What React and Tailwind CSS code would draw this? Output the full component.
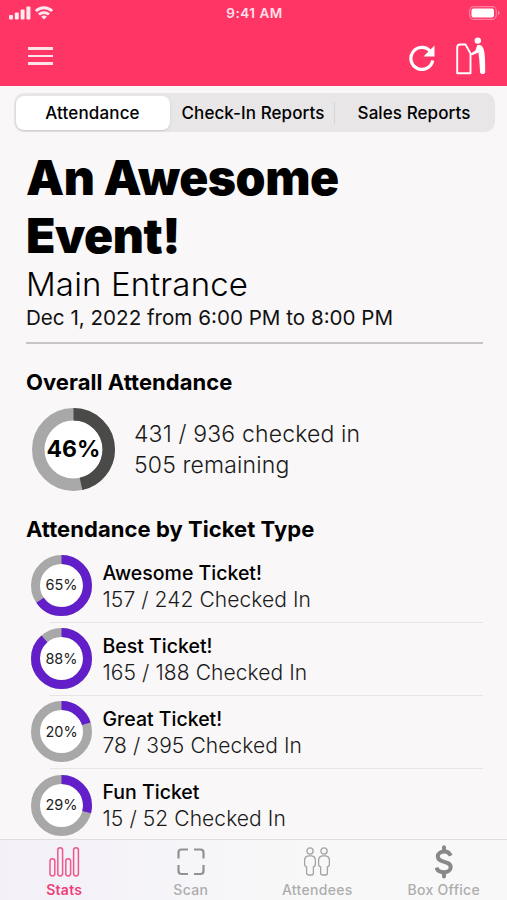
import React from "react";

const tickets = [
  { name: "Awesome Ticket!", percent: 65, checkedIn: 157, total: 242 },
  { name: "Best Ticket!", percent: 88, checkedIn: 165, total: 188 },
  { name: "Great Ticket!", percent: 20, checkedIn: 78, total: 395 },
  { name: "Fun Ticket", percent: 29, checkedIn: 15, total: 52 },
];

const SignalIcon = () => (
  <svg width="22" height="14" viewBox="0 0 22 14" fill="#ffe9ee">
    <rect x="0" y="9" width="4" height="4.5" rx="1" />
    <rect x="5.8" y="6.5" width="4" height="7" rx="1" />
    <rect x="11.6" y="3.5" width="4" height="10" rx="1" />
    <rect x="17.4" y="0.5" width="4" height="13" rx="1" />
  </svg>
);

const WifiIcon = () => (
  <svg width="18" height="14" viewBox="0 0 18 14" fill="none" stroke="#ffe9ee" strokeWidth="2.8">
    <path d="M0.9 5.1a11.5 11.5 0 0 1 16.2 0" />
    <path d="M4 8.6a7.1 7.1 0 0 1 10 0" />
    <path d="M9 13.6 6.2 10.8a4 4 0 0 1 5.600 0z" fill="#ffe9ee" stroke="none" />
  </svg>
);

const BatteryIcon = () => (
  <svg width="31" height="14" viewBox="0 0 31 14">
    <rect x="0.7" y="0.7" width="26.6" height="12.6" rx="4" fill="none" stroke="#ff7f9c" strokeWidth="1.2" />
    <rect x="2.5" y="2.5" width="22.5" height="9" rx="2" fill="#fff" />
    <path d="M29 4.8v4.4c1-.4 1.6-1.2 1.6-2.2S30 5.2 29 4.8z" fill="#ff8fa9" />
  </svg>
);

const RefreshIcon = () => (
  <svg width="26" height="26" viewBox="0 0 26 26">
    <path d="M21.2 6.2A11 11 0 1 0 23.7 15.5" fill="none" stroke="#fff" strokeWidth="3.2" />
    <path d="M25.5 0.5v11H14.5z" fill="#fff" />
  </svg>
);

const KioskIcon = () => (
  <svg width="30" height="38" viewBox="0 0 30 38">
    <path
      d="M1.2 36.3V10.5q0-3 3-3h5.3l5 9v19.8z"
      fill="none"
      stroke="#fff"
      strokeWidth="1.9"
      strokeLinejoin="round"
    />
    <circle cx="21.8" cy="3.6" r="3.2" fill="#fff" />
    <path
      d="M21.2 8.3c4.6-1.4 6.5 2.2 7.2 7.2.7 5 .9 11 .8 19.5 0 2.7-4.9 2.7-5.1 0L23.3 22.8c-.3-2.6-.8-4.5-.8-7.3l-5.7 2.6c-1.7.6-2.700-1.200-1.200-2.200l3.800-2.400z"
      fill="#fff"
    />
  </svg>
);

const StatsIcon = () => (
  <svg width="31" height="30" viewBox="0 0 31 30" fill="none" stroke="#f0588a" strokeWidth="1.5">
    <rect x="1" y="11.7" width="4.8" height="17.3" rx="2.4" />
    <rect x="8.8" y="0.8" width="4.8" height="28.2" rx="2.4" />
    <rect x="16.8" y="11.7" width="4.8" height="17.3" rx="2.4" />
    <rect x="24.6" y="0.8" width="4.8" height="28.2" rx="2.4" />
  </svg>
);

const ScanIcon = () => (
  <svg width="28" height="28" viewBox="0 0 28 28" fill="none" stroke="#929292" strokeWidth="2.2">
    <path d="M1.5 10.500V4.500q0-3 3-3h6.500M17 1.500h6.500q3 0 3 3v6M26.500 17v6q0 3-3 3H17M11 26H4.500q-3 0-3-3v-6" />
  </svg>
);

const Person = () => (
  <svg width="12" height="29" viewBox="0 0 12 29" fill="none" stroke="#a3a3a3" strokeWidth="1.3">
    <circle cx="6" cy="4" r="3.1" />
    <path d="M4.3 8.8h3.4q3.700.4 3.700 4.700v3.700q0 2.300-2 2.600v6q0 2.200-1.800 2.200H4.400q-1.800 0-1.800-2.200v-6q-2-.3-2-2.600v-3.700q0-4.300 3.700-4.700z" />
  </svg>
);

const AttendeesIcon = () => (
  <div className="flex gap-[2px]">
    <Person />
    <Person />
  </div>
);

const DollarIcon = () => (
  <svg width="18" height="34" viewBox="0 0 18 34" fill="none" stroke="#888" strokeWidth="4">
    <path d="M15.6 10.8C14.3 7.4 11.7 6.600 9.200 6.600 5.800 6.600 2.800 8.200 2.800 11.400c0 6.800 12.900 4 12.900 10.600 0 3.600-3 5.200-6.700 5.200-3.600 0-6.400-1.300-7.600-4.600" />
    <path d="M9 2.200v4M9 28v3.600" strokeLinecap="round" />
  </svg>
);

const Ring = ({ percent, size, thickness, color, children }) => {
  const r = (size - thickness) / 2;
  const length = 2 * Math.PI * r;

  return (
    <div className="grid shrink-0 place-items-center">
      <svg
        width={size}
        height={size}
        className="col-start-1 row-start-1 -rotate-90"
        fill="#fff"
        strokeWidth={thickness}
      >
        <circle cx={size / 2} cy={size / 2} r={r} stroke="#a8a8a8" />
        <circle
          cx={size / 2}
          cy={size / 2}
          r={r}
          fill="none"
          stroke={color}
          strokeDasharray={`${(length * percent) / 100} ${length}`}
        />
      </svg>
      <div className="z-10 col-start-1 row-start-1">{children}</div>
    </div>
  );
};

const TicketRow = ({ ticket, isLast }) => (
  <div className="h-[73.3px]">
    <div className="flex h-[72.6px] items-center pl-[5px]">
      <Ring percent={ticket.percent} size={61} thickness={9} color="#621fc9">
        <span className="block text-[14.5px] text-[#222]">{ticket.percent}%</span>
      </Ring>
      <div className="ml-[10.5px] whitespace-nowrap pt-[1.6px]">
        <p className="text-[19.5px] font-medium leading-[26px]">{ticket.name}</p>
        <p className="text-[21px] font-light leading-[27px] tracking-[0.08px] text-[#1a1a1a]">
          {ticket.checkedIn} / {ticket.total} Checked In
        </p>
      </div>
    </div>
    {!isLast && <div className="ml-6 h-px bg-[#e6e4e6]" />}
  </div>
);

const TabItem = ({ icon, label, active }) => (
  <div className="flex flex-1 flex-col items-center">
    <div className="flex h-[43px] items-center">{icon}</div>
    <span
      className={`text-[14px] leading-[14px] tracking-[0.3px] ${
        active ? "font-semibold text-[#ee3f7b]" : "font-medium text-[#adadad]"
      }`}
    >
      {label}
    </span>
  </div>
);

export default function App() {
  return (
    <div className="flex h-[900px] w-[507px] flex-col overflow-hidden bg-[#f9f7f8] font-['Inter',sans-serif] text-black">
      <header className="h-[86px] shrink-0 bg-[#ff3566] text-white">
        <div className="grid h-[27px] grid-cols-3 items-center pl-[9px] pr-[7px]">
          <div className="flex items-center gap-[4px] pb-px">
            <SignalIcon />
            <WifiIcon />
          </div>
          <span className="text-center text-[13.5px] font-semibold tracking-[0.5px] text-[#ffe0e8]">9:41 AM</span>
          <div className="flex justify-end pb-px">
            <BatteryIcon />
          </div>
        </div>
        <div className="flex h-[58px] items-center justify-between pl-[28px] pr-[21px]">
          <div className="flex flex-col gap-[5px]">
            <div className="h-[2.5px] w-[25px] bg-[#ffe3ea]" />
            <div className="h-[2.5px] w-[25px] bg-[#ffe3ea]" />
            <div className="h-[2.5px] w-[25px] bg-[#ffe3ea]" />
          </div>
          <div className="flex items-center gap-[21px]">
            <div className="pt-[3px]">
              <RefreshIcon />
            </div>
            <KioskIcon />
          </div>
        </div>
      </header>

      <div className="mx-[14px] mt-[7px] flex h-[39px] w-[481px] shrink-0 items-center whitespace-nowrap rounded-[10px] bg-[#e8e6e7] px-[2px] text-center text-[17px] font-medium">
        <div className="h-[34px] w-[154px] rounded-[8px] bg-white pr-px leading-[34px] tracking-[0.15px] shadow">
          Attendance
        </div>
        <div className="w-[164px] pl-[2px] pt-[2px] tracking-[0.08px]">Check-In Reports</div>
        <div className="h-[22px] w-px bg-[#d6d4d6]" />
        <div className="flex-1 pt-[2px] tracking-[0.08px]">Sales Reports</div>
      </div>

      <main className="min-h-0 flex-1 overflow-hidden pl-[26px] pr-[24px] pt-[17px]">
        <h1 className="text-[48px] font-black leading-[58px] tracking-[-0.45px]">
          An Awesome
          <br />
          Event!
        </h1>
        <p className="text-[33px] font-light leading-[38px] tracking-[0.15px]">Main Entrance</p>
        <p className="whitespace-nowrap pt-px text-[20.6px] leading-[27px] text-[#111]">
          Dec 1, 2022 from 6:00 PM to 8:00 PM
        </p>
        <div className="mt-[11px] h-[2px] bg-[#c6c5c7]" />

        <h2 className="mt-[24px] text-[22px] font-bold leading-[28px] tracking-[0.05px]">Overall Attendance</h2>
        <div className="mt-[11px] flex h-[84px] items-center pl-[6px]">
          <Ring percent={46.5} size={83} thickness={12.5} color="#4a4a48">
            <span className="text-[23px] font-bold">46%</span>
          </Ring>
          <div className="ml-[19px] pt-px text-[23px] font-light leading-[30.5px] tracking-[0.15px] text-[#1a1a1a]">
            <p>431 / 936 checked in</p>
            <p>505 remaining</p>
          </div>
        </div>

        <h2 className="mt-[24px] text-[22px] font-bold leading-[28px] tracking-[0.05px]">Attendance by Ticket Type</h2>
        <div className="mt-[6px]">
          {tickets.map((ticket, i) => (
            <TicketRow key={ticket.name} ticket={ticket} isLast={i === tickets.length - 1} />
          ))}
        </div>
      </main>

      <nav className="flex h-[61px] shrink-0 border-t border-[#dfdde0] bg-linear-to-r from-[#f3f0f9] to-[#f8f8f8] to-60% pl-px">
        <TabItem icon={<StatsIcon />} label="Stats" active />
        <TabItem icon={<ScanIcon />} label="Scan" />
        <TabItem icon={<AttendeesIcon />} label="Attendees" />
        <TabItem icon={<DollarIcon />} label="Box Office" />
      </nav>
    </div>
  );
}
